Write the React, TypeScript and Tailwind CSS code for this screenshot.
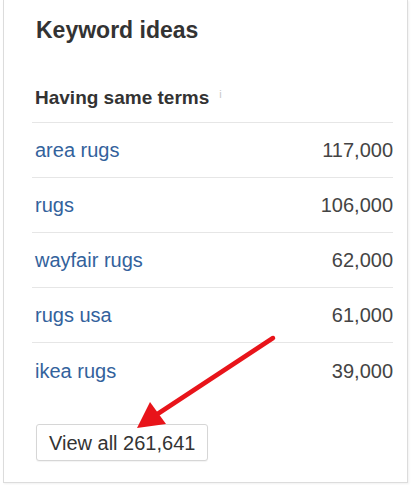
const rows = [
  { term: "area rugs", volume: "117,000" },
  { term: "rugs", volume: "106,000" },
  { term: "wayfair rugs", volume: "62,000" },
  { term: "rugs usa", volume: "61,000" },
  { term: "ikea rugs", volume: "39,000" },
];

function Arrow() {
  // red annotation arrow pointing at the button
  return (
    <svg className="absolute left-0 top-0 pointer-events-none" width="412" height="485" viewBox="0 0 412 485">
      <line x1="273" y1="338" x2="156" y2="415" stroke="#e8141a" strokeWidth="4.5" strokeLinecap="round" />
      <polygon points="137,428 150,402 166,424" fill="#e8141a" />
    </svg>
  );
}

export default function App() {
  return (
    <div className="relative w-[412px] h-[485px] bg-white" style={{ fontFamily: '"Liberation Sans", Arial, sans-serif' }}>
      <div className="ml-[3px] w-[405px] h-[483px] border-x border-b border-[#dcdcdc] shadow-[1px_1px_2px_rgba(0,0,0,0.06)] pl-[28px] pr-[14px] pt-[16px]">
        <h2 className="pl-[4px] text-[23px] leading-[28px] font-bold text-[#333]">Keyword ideas</h2>

        <div className="mt-[42px] pb-[12px] pl-[3px] border-b border-[#e6e6e6] flex items-start">
          <span className="text-[19px] leading-[24px] font-bold text-[#333]">Having same terms</span>
          <span className="ml-[10px] mt-[2px] text-[11px] leading-[12px] text-[#c8c8c8]">i</span>
        </div>

        {rows.map((row, i) => (
          <div
            key={row.term}
            className={`h-[55px] pl-[3px] flex items-center justify-between text-[20px] ${i < rows.length - 1 ? "border-b border-[#e6e6e6]" : ""}`}
          >
            <a className="text-[#33629c]">{row.term}</a>
            <span className="text-[#444]">{row.volume}</span>
          </div>
        ))}

        <button className="mt-[26px] ml-[4px] h-[37px] px-[12px] flex items-center border border-[#d6d6d6] rounded-[3px] bg-white text-[20px] text-[#333] shadow-[0_1px_1px_rgba(0,0,0,0.05)]">
          View all 261,641
        </button>
      </div>
      <Arrow />
    </div>
  );
}
